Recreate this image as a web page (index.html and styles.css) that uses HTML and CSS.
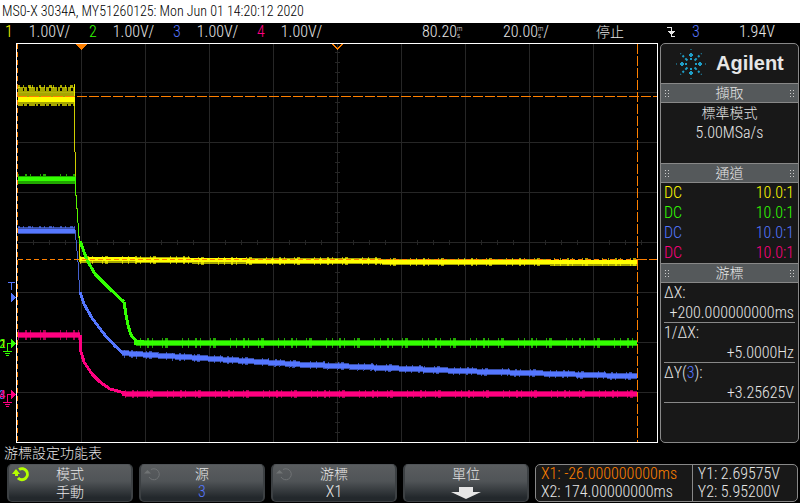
FILE: index.html
```html
<!DOCTYPE html>
<html lang="zh-Hant">
<head>
<meta charset="UTF-8">
<meta name="viewport" content="width=device-width, initial-scale=1.0">
<title>MSO-X 3034A</title>
<link rel="stylesheet" href="styles.css">
</head>
<body>
<header class="title">MS0-X 3034A, MY51260125: Mon Jun 01 14:20:12 2020</header>
<div class="status">
    <div class="channel"><span class="c1">1</span><span>1.00V/</span></div>
    <div class="channel"><span class="c2">2</span><span>1.00V/</span></div>
    <div class="channel"><span class="c3">3</span><span>1.00V/</span></div>
    <div class="channel"><span class="c4">4</span><span>1.00V/</span></div>
    <div class="time">80.20<span class="unit"><i>m</i><i>s</i></span></div>
    <div class="time">20.00<span class="unit"><i>m</i><i>s</i></span>/</div>
    <div class="cjk">停止</div>
    <svg class="edge" viewBox="0 0 8 12"><path class="wire" d="M0 1H4.500V10.500H8"/><path d="M0 5H8L4.500 9Z"/></svg>
    <div class="c3">3</div>
    <div>1.94V</div>
</div>
<main class="scope">
    <svg class="plot" viewBox="0 0 660 400">
        <defs>
            <pattern id="grid" x="17" y="-1" width="64" height="50" patternUnits="userSpaceOnUse">
                <path d="M0 .5H64M.5 0V50"/>
            </pattern>
        </defs>
        <rect x="18" y="1" width="639" height="398" fill="url(#grid)"/>
        <!-- center ticks -->
        <path class="tick-x" d="M33 199.500H657"/>
        <path class="tick-y" d="M337.500 9V399"/>
        <!-- frame -->
        <path class="frame" d="M16.500 0V399.500M16 .5H657.500V399.500H16"/>

        <!-- channel 1 -->
        <g class="c1">
            <path class="dim" stroke-width="13" d="M18 54.500H75"/>
            <path class="dim fuzz" stroke-width="4" d="M18 46H75"/>
            <path class="dim fuzz-b" stroke-width="3" d="M18 43H75"/>
            <path class="dim fuzz" stroke-width="2" d="M18 62H75"/>
            <path stroke-width="5" d="M18 56.500H75"/>
            <path class="thin" d="M74.500 41V84L75.500 133V145L79.500 200V219"/>
            <path class="dim" stroke-width="6" d="M80 217L300 218L460 219L637 220"/>
            <path class="dim spikes" stroke-width="8" d="M80 217L300 218L460 219L637 219"/>
            <path stroke-width="4" d="M80 216L300 218L460 219L637 219"/>
        </g>
        <!-- channel 3 -->
        <g class="c3">
            <path class="dim" stroke-width="7" d="M18 187.500H75"/>
            <path class="dim fuzz-b" stroke-width="2" d="M18 184H75"/>
            <path stroke-width="4" d="M18 187.500H75"/>
            <path class="thin" d="M75 187L76 197L78 219L79 237L80 249"/>
            <path class="curve" d="M80 249L84 261L92 275L104 291L115 303L124 311"/>
            <path class="dim" stroke-width="6" d="M122 310L150 312L200 315L300 321.500L460 328L560 331L637 333.500"/>
            <path stroke-width="4" d="M122 310L150 312L200 315L300 321.500L460 328L560 331L637 333.500"/>
            <path class="dim spikes" stroke-width="8" d="M124 311L200 315L300 321.500L460 328L637 333.500"/>
        </g>
        <!-- channel 4 -->
        <g class="c4">
            <path class="dim" stroke-width="6" d="M18 292H80"/>
            <path class="dim spikes" stroke-width="10" d="M18 292H80"/>
            <path stroke-width="4" d="M18 292H80"/>
            <path class="curve" d="M80.500 292V307L84 319L92 331L100 339L110 346L125 350L140 351"/>
            <path class="dim" stroke-width="6" d="M125 351H637"/>
            <path class="dim spikes" stroke-width="8" d="M125 351H637"/>
            <path stroke-width="4" d="M122 351H637"/>
        </g>
        <!-- channel 2 -->
        <g class="c2">
            <path class="dim" stroke-width="8" d="M18 137H76"/>
            <path class="dim spikes" stroke-width="2" d="M18 132H75"/>
            <path stroke-width="4" d="M18 136H76"/>
            <path class="thin" d="M75.500 138V147L77 165L79 195L80 198"/>
            <path class="curve" d="M80 198L87 217L95 231L110 246L124 259"/>
            <path class="curve" d="M124 259L126 272L128 282L131 292L136 298L144 299"/>
            <path class="dim" stroke-width="6" d="M136 300H637"/>
            <path class="dim spikes" stroke-width="10" d="M140 300H637"/>
            <path stroke-width="4" d="M134 300H637"/>
        </g>

        <!-- cursors -->
        <path class="cursor" d="M17 53.500H657"/>
        <path class="cursor thin-dash" d="M18 216.500H637"/>
        <path class="cursor" d="M637 216.500H657"/>
        <path class="cursor" d="M637.500 1V399"/>
        <path class="cursor thin-dash" d="M17.500 1V399"/>
        <path class="mark" d="M75 1H87L81 7Z"/>
        <path class="mark-open" d="M332.500 1L337.500 6L342.500 1"/>

        <!-- ground and trigger markers -->
        <path class="c3 gnd" d="M8 239.500H15M11.500 239V247"/>
        <path class="c3 fill" d="M11 250V259L16 254.500Z"/>
        <text class="axis c1" x="0" y="305">1</text>
        <text class="axis c2" x="-1" y="305">2</text>
        <path class="c2 fill" d="M11 296V305L16 300.500Z"/>
        <path class="c2 gnd" d="M11 300.500H7.500V308M3 308.500H12M5 310.500H10M6 312.500H9"/>
        <text class="axis c3" x="-1" y="356">3</text>
        <text class="axis c4" x="-1" y="356">4</text>
        <path class="c4 fill" d="M11 347V356L16 351.500Z"/>
        <path class="c4 gnd" d="M11 351.500H7.500V359M3 359.500H12M5 361.500H10M6 363.500H9"/>
    </svg>

    <aside class="panel">
        <div class="brand">
            <svg viewBox="-15 -15 30 30">
                <defs>
                    <g id="ray">
                        <path d="M-1 -6H1V-4H-1ZM-2 -10H2V-8H-2ZM-1 -11H1V-7H-1ZM-.5 -15H.5V-14H-.5Z"/>
                    </g>
                    <g id="ray-short">
                        <path d="M-1 -8H1V-5H-1ZM-1 -12H1V-10H-1ZM-.5 -15H.5V-14H-.5Z"/>
                    </g>
                </defs>
                <use href="#ray"/>
                <use href="#ray" transform="rotate(90)"/>
                <use href="#ray" transform="rotate(180)"/>
                <use href="#ray" transform="rotate(270)"/>
                <use href="#ray-short" transform="rotate(45)"/>
                <use href="#ray-short" transform="rotate(135)"/>
                <use href="#ray-short" transform="rotate(225)"/>
                <use href="#ray-short" transform="rotate(315)"/>
            </svg>
            <span>Agilent</span>
        </div>
        <h2>擷取</h2>
        <div class="acquire">
            <p class="cjk">標準模式</p>
            <p>5.00MSa/s</p>
        </div>
        <h2>通道</h2>
        <ul class="probes">
            <li class="c1"><span>DC</span><span>10.0:1</span></li>
            <li class="c2"><span>DC</span><span>10.0:1</span></li>
            <li class="c3"><span>DC</span><span>10.0:1</span></li>
            <li class="c4"><span>DC</span><span>10.0:1</span></li>
        </ul>
        <h2>游標</h2>
        <dl class="deltas">
            <div><dt>ΔX:</dt><dd>+200.000000000ms</dd></div>
            <div><dt>1/ΔX:</dt><dd>+5.0000Hz</dd></div>
            <div><dt>ΔY(<span class="c3">3</span>):</dt><dd>+3.25625V</dd></div>
        </dl>
    </aside>
</main>

<div class="menu-title">游標設定功能表</div>
<nav class="menu">
    <button type="button" class="active">
        <svg class="knob" viewBox="0 0 18 16"><path class="ring" d="M7 3.500A5.500 5.500 0 1 1 6 12"/><path class="head" d="M0 8L4 3L8 8L6 8V10H3V8Z"/></svg>
        <span>模式</span><span>手動</span>
    </button>
    <button type="button">
        <svg class="knob" viewBox="0 0 18 16"><path class="ring" d="M7 3.500A5.500 5.500 0 1 1 5 11"/><path class="head" d="M0 7.500L3.500 4L7 7.500Z"/></svg>
        <span>源</span><span class="value c3">3</span>
    </button>
    <button type="button">
        <svg class="knob" viewBox="0 0 18 16"><path class="ring" d="M7 3.500A5.500 5.500 0 1 1 5 11"/><path class="head" d="M0 7.500L3.500 4L7 7.500Z"/></svg>
        <span>游標</span><span class="value">X1</span>
    </button>
    <button type="button" aria-label="單位">
        <span>單位</span>
        <svg class="down" viewBox="0 0 30 12"><path d="M8 0H22V5H30L15 12L0 5H8Z"/></svg>
    </button>
    <div class="cursors">
        <div><p class="x1">X1: -26.000000000ms</p><p>X2: 174.00000000ms</p></div>
        <div><p>Y1: 2.69575V</p><p>Y2: 5.95200V</p></div>
    </div>
</nav>
</body>
</html>
```
FILE: styles.css
```css
* {box-sizing: border-box;}
body {margin: 0;background: #000;color: #e6e6e6;font: 300 16px/20px "Roboto Condensed", "Liberation Sans Narrow", "Liberation Sans", "Noto Sans CJK TC", sans-serif;}
h2, p, ul, dl, dd {margin: 0;padding: 0;list-style: none;}
.c1 {color: #ff0;}
.c2 {color: #3f0;}
.c3 {color: #57f;}
.c4 {color: #ff0080;}
.cjk {font: 300 14px/20px "Liberation Sans", "Noto Sans CJK TC", sans-serif;}

.title {height: 23px;padding-left: 2px;font-size: 14px;line-height: 23px;background: #fff;color: #000;white-space: nowrap;}
.status {display: grid;grid-template-columns: 84fr 84fr 84fr 165fr 81fr 93fr 71fr 25fr 47fr 61fr;height: 20px;padding-left: 5px;line-height: 18px;white-space: nowrap;}
.status .cjk {line-height: 18px;}
.channel {display: flex;gap: 16px;}
.time {display: flex;}
.unit {display: flex;flex-direction: column;padding-top: 3px;font-size: 7px;line-height: 7px;}
.unit i {font-style: normal;}
.edge {width: 8px;height: 12px;margin-top: 3px;fill: #e6e6e6;shape-rendering: crispEdges;}
.edge .wire {fill: none;stroke: #e6e6e6;}

.scope {display: flex;align-items: flex-start;padding-right: 1px;}
.plot {flex: 1;min-width: 0;display: block;fill: none;shape-rendering: crispEdges;}
.plot pattern path, .tick-x, .tick-y {stroke: #262626;}
.tick-x {stroke-width: 5;stroke-dasharray: 1 15;}
.tick-y {stroke-width: 5;stroke-dasharray: 1 9;}
.frame {stroke: #fff;}
.plot g path {stroke: currentColor;}
.plot .dim {opacity: .65;}
.plot .thin {stroke-width: 1;opacity: .8;}
.plot .curve {stroke-width: 3;}
.fuzz {stroke-dasharray: 5 1 3 2 6 1 2 2;}
.fuzz-b {stroke-dasharray: 2 3 1 4 3 1 1 6;}
.spikes {stroke-dasharray: 1 6 2 3 1 9 1 2 3 14 1 5;}
.cursor {stroke: #ff8000;stroke-dasharray: 10 2;}
.thin-dash {stroke-dasharray: 5 3;}
.mark {fill: #ff8000;}
.mark-open {stroke: #ff8000;stroke-width: 2;}
.axis {fill: currentColor;font-size: 13px;font-weight: 400;}
.fill {fill: currentColor;}
.gnd {stroke: currentColor;}

.panel {width: 139px;height: 400px;border: 1px solid #888;border-radius: 5px;background: #181818;}
.brand {display: flex;align-items: center;height: 39px;padding-left: 15px;gap: 10px;font: bold 20px/39px "Liberation Sans", sans-serif;}
.brand svg {width: 30px;height: 30px;fill: #1f9fc8;}
.panel h2 {display: flex;justify-content: space-between;align-items: center;height: 20px;padding: 0 4px;border: solid #888;border-width: 1px 0;background: #55595b;font: 300 14px/18px "Liberation Sans", "Noto Sans CJK TC", sans-serif;}
.panel h2::before, .panel h2::after {content: "";width: 4px;height: 7px;background: linear-gradient(#ccc, #ccc) 0 0 / 1px 100%, linear-gradient(#ccc, #ccc) 3px 0 / 1px 100%;background-repeat: no-repeat;-webkit-mask: repeating-linear-gradient(#000 0 1px, transparent 1px 3px);mask: repeating-linear-gradient(#000 0 1px, transparent 1px 3px);}
.acquire {height: 60px;text-align: center;}
.probes {height: 80px;}
.probes li {display: flex;justify-content: space-between;padding: 0 4px 0 3px;}
.deltas {padding: 0 3px;}
.deltas div {height: 40px;border-bottom: 1px solid #888;}
.deltas dt {height: 20px;}
.deltas dd {height: 19px;padding-right: 1px;text-align: right;}

.menu-title {height: 21px;padding-left: 4px;font: 300 14px/20px "Liberation Sans", "Noto Sans CJK TC", sans-serif;}
.menu {display: grid;grid-template-columns: 126fr 126fr 126fr 126fr 263fr;gap: 6px;height: 38px;padding: 0 2px 0 7px;}
.menu button {position: relative;display: flex;flex-direction: column;align-items: center;padding: 0;border: solid #3c4043;border-width: 1px 2px;border-top-color: #505458;border-radius: 5px;background: linear-gradient(#5a5d5f, #505457 45%, #23282c 90%);color: #e6e6e6;font: 300 14px/18px "Liberation Sans", "Noto Sans CJK TC", sans-serif;}
.menu .value {font: 300 16px/18px "Roboto Condensed", "Liberation Sans Narrow", "Liberation Sans", sans-serif;}
.menu .c3 {color: #57f;}
.knob {position: absolute;left: 3px;top: 1px;width: 18px;height: 16px;}
.ring {fill: none;stroke: #707375;stroke-width: 1;}
.head {fill: #707375;}
.active .ring {stroke: #b4ff00;stroke-width: 3;}
.active .head {fill: #b4ff00;}
.down {width: 30px;height: 12px;margin-top: 4px;fill: #e6e6e6;}
.cursors {display: grid;grid-template-columns: 157fr 106fr;border: 1px solid #888;border-radius: 5px;background: #181818;line-height: 18px;white-space: nowrap;}
.cursors div {padding-left: 5px;}
.cursors div + div {border-left: 1px solid #888;}
.x1 {color: #ff8000;}
```
